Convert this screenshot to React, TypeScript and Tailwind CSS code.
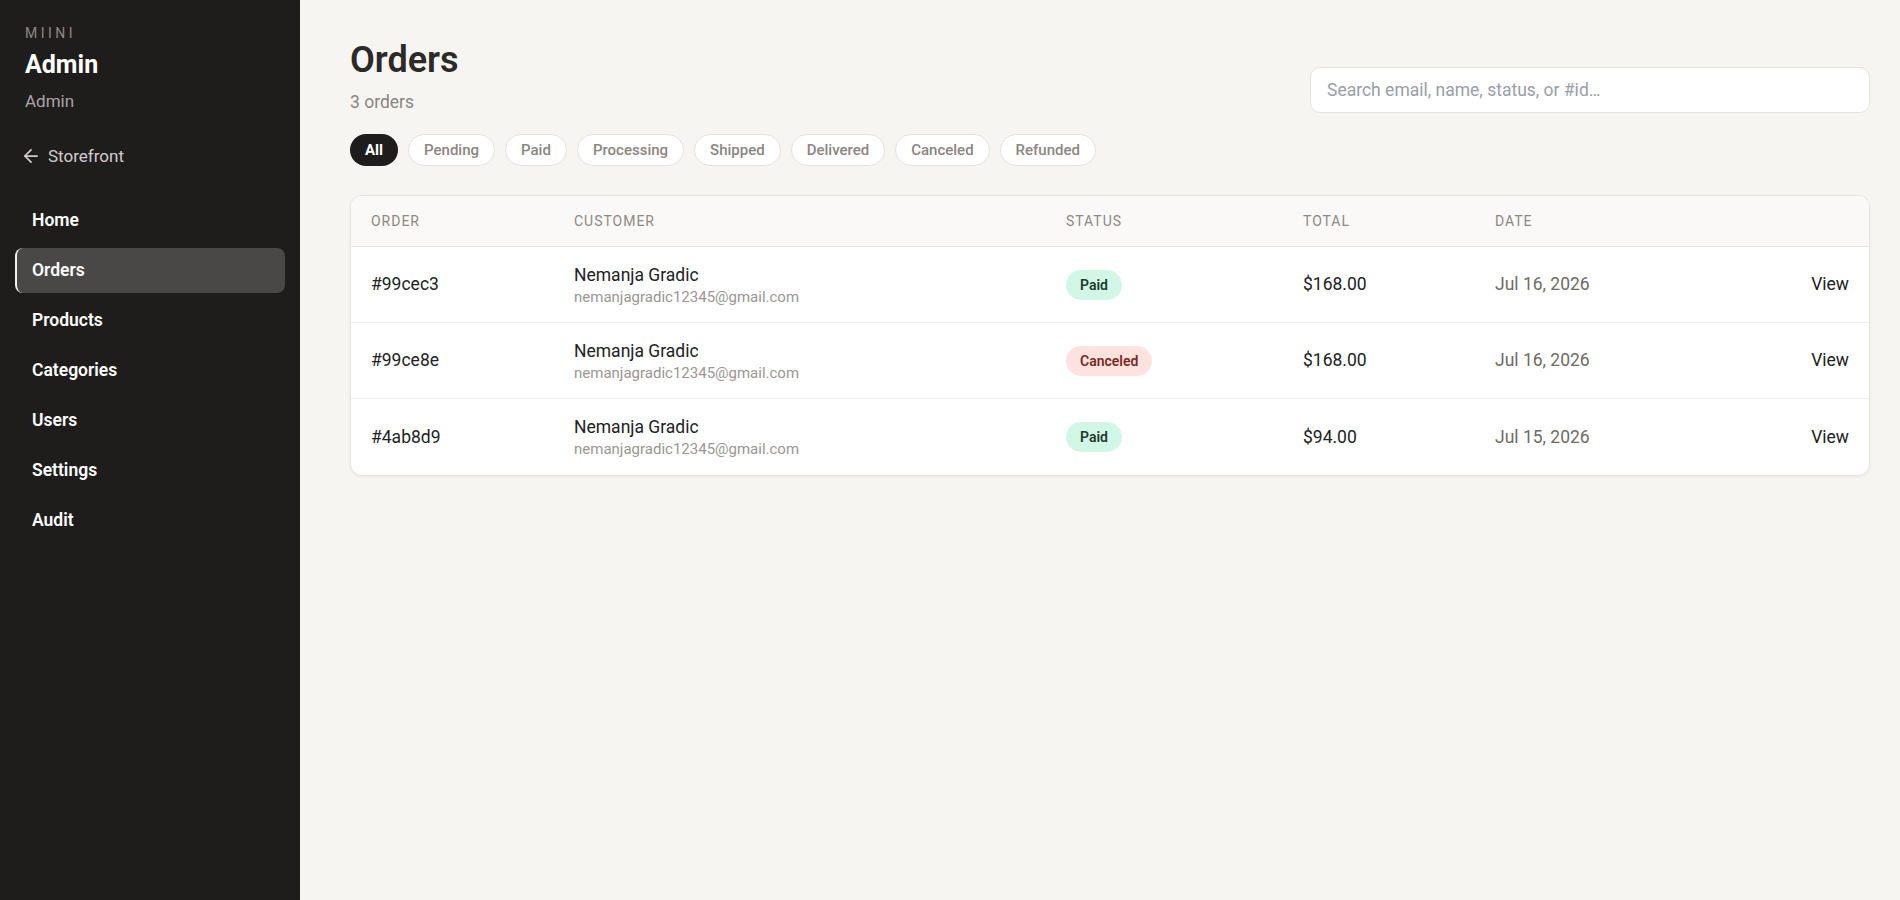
import React from 'react';

type Order = {
  id: string;
  name: string;
  email: string;
  status: 'Paid' | 'Canceled';
  total: string;
  date: string;
};

const orders: Order[] = [
  { id: '#99cec3', name: 'Nemanja Gradic', email: 'nemanjagradic12345@gmail.com', status: 'Paid', total: '$168.00', date: 'Jul 16, 2026' },
  { id: '#99ce8e', name: 'Nemanja Gradic', email: 'nemanjagradic12345@gmail.com', status: 'Canceled', total: '$168.00', date: 'Jul 16, 2026' },
  { id: '#4ab8d9', name: 'Nemanja Gradic', email: 'nemanjagradic12345@gmail.com', status: 'Paid', total: '$94.00', date: 'Jul 15, 2026' },
];

const navItems = ['Home', 'Orders', 'Products', 'Categories', 'Users', 'Settings', 'Audit'];
const filters = ['All', 'Pending', 'Paid', 'Processing', 'Shipped', 'Delivered', 'Canceled', 'Refunded'];

const cols = 'grid grid-cols-[203px_492px_237px_192px_1fr_auto] items-center';

const StatusPill = ({ status }: { status: Order['status'] }) => (
  <span
    className={`inline-flex h-[30px] items-center rounded-full px-3.5 text-sm font-semibold ${
      status === 'Paid' ? 'bg-[#d3f7e6] text-[#1d3b2f]' : 'bg-[#fde2e0] text-[#7a2a1c]'
    }`}
  >
    {status}
  </span>
);

export default function App() {
  return (
    <div className="flex min-h-[900px] w-full font-['Roboto','Liberation_Sans',sans-serif]">
      {/* sidebar */}
      <aside className="w-[300px] shrink-0 bg-[#1f1d1c]">
        <div className="px-[25px] pt-[25px]">
          <div className="text-sm leading-4 tracking-[0.25em] text-[#8f8782]">MIINI</div>
          <div className="mt-2 text-[25px] leading-8 font-bold text-white">Admin</div>
          <div className="mt-2 text-[17px] leading-6 text-[#aaa3a6]">Admin</div>
          <div className="mt-[31px] -ml-px flex items-center gap-2.5 text-[17px] leading-6 text-[#d2ccce]">
            <svg width="14" height="14" viewBox="4 4 16 16" fill="none" stroke="currentColor" strokeWidth="2" strokeLinecap="round" strokeLinejoin="round">
              <path d="M19 12H5" />
              <path d="M12 19l-7-7 7-7" />
            </svg>
            <span>Storefront</span>
          </div>
        </div>
        <nav className="mt-[30px] flex flex-col gap-[5px] px-[15px]">
          {navItems.map((item) => {
            const active = item === 'Orders';
            return (
              <div
                key={item}
                className={`flex h-[45px] items-center rounded-lg border-l-2 pl-[15px] text-[17.5px] font-semibold text-white ${
                  active ? 'border-[#f2f0ee] bg-[#4a4847]' : 'border-transparent'
                }`}
              >
                {item}
              </div>
            );
          })}
        </nav>
      </aside>

      {/* main */}
      <main className="flex-1 bg-[#f6f5f2] pl-[50px] pr-[30px] pt-10">
        <div className="flex items-start justify-between">
          <div>
            <h1 className="text-4xl leading-10 font-semibold text-[#2b2a29]">Orders</h1>
            <div className="mt-2 text-[17.5px] leading-7 text-[#8b8681]">3 orders</div>
            <div className="mt-[18px] flex gap-2.5">
              {filters.map((f) =>
                f === 'All' ? (
                  <span key={f} className="flex h-8 items-center rounded-full bg-[#1f1d1c] px-[15px] text-[15px] font-bold text-white">
                    {f}
                  </span>
                ) : (
                  <span key={f} className="flex h-8 items-center rounded-full border border-[#e4e2df] bg-white px-[15px] text-[15px] font-medium text-[#8b8681]">
                    {f}
                  </span>
                )
              )}
            </div>
          </div>
          <div className="mt-[27px] flex h-[46px] w-[560px] items-center rounded-[10px] border border-[#e4e2df] bg-white px-4 text-[17.5px] text-[#9a9ea6]">
            Search email, name, status, or #id…
          </div>
        </div>

        <div className="mt-[29px] overflow-hidden rounded-xl border border-[#e6e4e1] bg-white shadow-[0_1px_3px_rgba(0,0,0,0.06)]">
          <div className={`${cols} h-[51px] border-b border-[#e6e4e1] bg-[#faf9f7] text-sm tracking-[0.07em] text-[#8e8883]`}>
            <div className="px-5">ORDER</div>
            <div className="px-5">CUSTOMER</div>
            <div className="px-5">STATUS</div>
            <div className="px-5">TOTAL</div>
            <div className="px-5">DATE</div>
            <div className="px-5" />
          </div>
          {orders.map((o, i) => (
            <div key={o.id} className={`${cols} h-[76px] ${i < orders.length - 1 ? 'border-b border-[#efedea]' : ''}`}>
              <div className="px-5 text-[17.5px] text-[#222]">{o.id}</div>
              <div className="px-5">
                <div className="text-[17.5px] leading-6 text-[#222]">{o.name}</div>
                <div className="text-[15px] leading-5 text-[#9b9692]">{o.email}</div>
              </div>
              <div className="px-5">
                <StatusPill status={o.status} />
              </div>
              <div className="px-5 text-[17.5px] text-[#222]">{o.total}</div>
              <div className="px-5 text-[17.5px] text-[#6f6a65]">{o.date}</div>
              <div className="px-5 text-right text-[17.5px] text-[#222]">View</div>
            </div>
          ))}
        </div>
      </main>
    </div>
  );
}
